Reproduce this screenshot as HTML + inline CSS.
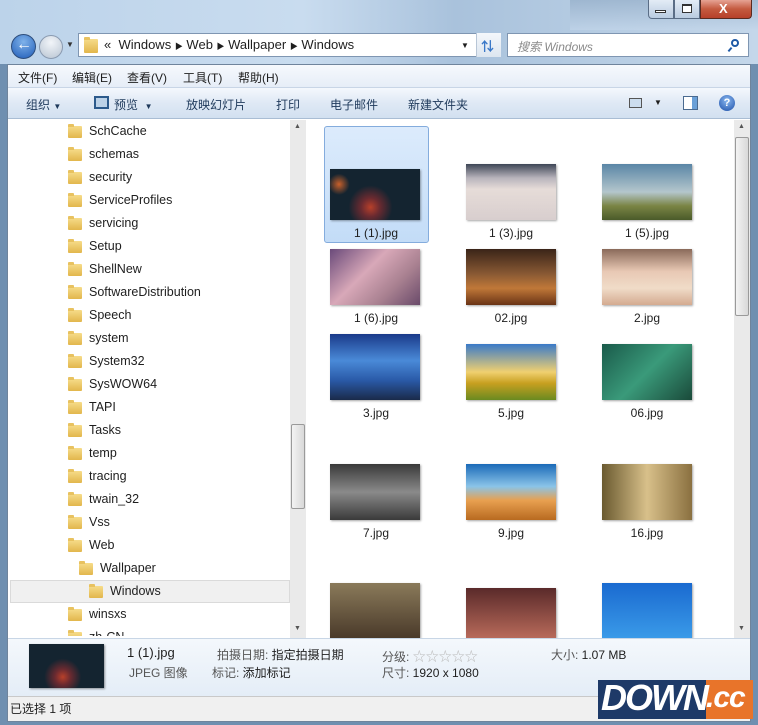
<!DOCTYPE html><html><head><meta charset="utf-8"><style>
*{margin:0;padding:0;box-sizing:border-box}
body{width:758px;height:725px;overflow:hidden;background:#6f8fb0;font-family:"Liberation Sans","Noto Sans CJK SC",sans-serif;font-size:12px;color:#1e1e1e;position:relative}
.a{position:absolute}
.t{position:absolute;white-space:nowrap}
.f{position:absolute;width:14px;height:12px;background:linear-gradient(#f6dc8a,#e2b64c);border-radius:1px}
.f:before{content:"";position:absolute;left:0;top:-2px;width:6px;height:3px;background:#e8c260;border-radius:1px 1px 0 0}
.th{position:absolute;width:90px;box-shadow:1px 1px 2px rgba(0,0,0,.35)}
.lb{position:absolute;width:130px;text-align:center;font-size:12px}
</style></head><body>
<div class="a" style="left:0;top:0;width:758px;height:64px;background:linear-gradient(90deg,#bcd3ea 0%,#c9dcef 40%,#a9c2dc 60%,#c4d7ea 100%)"></div>
<div class="a" style="left:570px;top:0;width:188px;height:30px;background:linear-gradient(#8fa9c4,#c3d6ea);opacity:.6"></div>
<div class="a" style="left:648px;top:0;width:26px;height:19px;border:1px solid #5a6d86;border-top:0;border-radius:0 0 0 4px;background:linear-gradient(#e3ecf6,#b9cbe0)"></div>
<div class="a" style="left:655px;top:10px;width:11px;height:3px;border:1px solid #333;background:#fff"></div>
<div class="a" style="left:674px;top:0;width:26px;height:19px;border:1px solid #5a6d86;border-top:0;background:linear-gradient(#e3ecf6,#b9cbe0)"></div>
<div class="a" style="left:682px;top:4px;width:10px;height:9px;border:1px solid #333;border-top-width:2px;background:#fff"></div>
<div class="a" style="left:700px;top:0;width:52px;height:19px;border:1px solid #5a2a20;border-top:0;border-radius:0 0 4px 0;background:linear-gradient(#e6a394,#c45a3f 50%,#b7402a)"></div>
<div class="t" style="left:719px;top:1px;color:#fff;font-weight:bold;font-size:13px">X</div>
<div class="a" style="left:11px;top:34px;width:25px;height:25px;border-radius:50%;background:radial-gradient(circle at 50% 30%,#7fb2ea,#1f5cb8);border:1px solid #2d4d7c"></div>
<div class="t" style="left:16px;top:36px;color:#fff;font-size:16px;font-weight:bold">&#8592;</div>
<div class="a" style="left:39px;top:35px;width:24px;height:24px;border-radius:50%;background:radial-gradient(circle at 50% 30%,#f2f5f9,#b8c4d2);border:1px solid #8a9ab0"></div>
<div class="t" style="left:66px;top:40px;font-size:8px;color:#333">&#9660;</div>
<div class="a" style="left:78px;top:33px;width:423px;height:24px;background:#fff;border:1px solid #7f96b2"></div>
<div class="f" style="left:84px;top:39px;height:14px"></div>
<div class="t" style="left:104px;top:37px;font-size:13px">«&nbsp; Windows <span style="font-size:8px">&#9654;</span> Web <span style="font-size:8px">&#9654;</span> Wallpaper <span style="font-size:8px">&#9654;</span> Windows</div>
<div class="t" style="left:461px;top:41px;font-size:8px">&#9660;</div>
<div class="a" style="left:476px;top:33px;width:25px;height:24px;border-left:1px solid #b8c6d6;background:linear-gradient(#f4f7fb,#dde6f0)"></div>
<div class="t" style="left:481px;top:36px;color:#3a78c8;font-size:13px;font-weight:bold">&#8645;</div>
<div class="a" style="left:507px;top:33px;width:242px;height:24px;background:#fff;border:1px solid #7f96b2"></div>
<div class="t" style="left:517px;top:38px;color:#8a8a8a;font-style:italic">搜索 Windows</div>
<div class="a" style="left:731px;top:39px;width:8px;height:8px;border:2px solid #1f5aa6;border-radius:50%"></div>
<div class="a" style="left:729px;top:47px;width:2px;height:5px;background:#1f5aa6;transform:rotate(40deg)"></div>
<div class="a" style="left:7px;top:64px;width:744px;height:658px;background:#fff;border:1px solid #6f849c"></div>
<div class="a" style="left:8px;top:65px;width:742px;height:23px;background:linear-gradient(#f6f9fd,#e6edf7);border-bottom:1px solid #c8d5e6"></div>
<div class="t" style="left:18px;top:69px">文件(F)</div><div class="t" style="left:72px;top:69px">编辑(E)</div><div class="t" style="left:127px;top:69px">查看(V)</div><div class="t" style="left:183px;top:69px">工具(T)</div><div class="t" style="left:238px;top:69px">帮助(H)</div>
<div class="a" style="left:8px;top:88px;width:742px;height:31px;background:linear-gradient(#f4f8fd,#dfe9f5 50%,#d2e0f0);border-bottom:1px solid #a9bdd4"></div>
<div class="t" style="left:26px;top:96px;color:#1e395b">组织 <span style="font-size:8px">&#9660;</span></div>
<div class="a" style="left:94px;top:96px;width:15px;height:13px;border:2px solid #2c5a8c;background:#bcd2e8"></div>
<div class="t" style="left:114px;top:96px;color:#1e395b">预览 &nbsp;<span style="font-size:8px">&#9660;</span></div>
<div class="t" style="left:186px;top:96px;color:#1e395b">放映幻灯片</div>
<div class="t" style="left:276px;top:96px;color:#1e395b">打印</div>
<div class="t" style="left:330px;top:96px;color:#1e395b">电子邮件</div>
<div class="t" style="left:408px;top:96px;color:#1e395b">新建文件夹</div>
<div class="a" style="left:629px;top:98px;width:13px;height:10px;border:1px solid #555;background:#cde"></div>
<div class="t" style="left:654px;top:98px;font-size:8px">&#9660;</div>
<div class="a" style="left:683px;top:96px;width:15px;height:14px;border:1px solid #4a6a90;background:linear-gradient(90deg,#fff 60%,#6aa0d8 60%)"></div>
<div class="a" style="left:719px;top:95px;width:16px;height:16px;border-radius:50%;background:radial-gradient(circle at 50% 35%,#8ab8f0,#1c4fa8);color:#fff;font-weight:bold;font-size:11px;text-align:center;line-height:16px">?</div>
<div class="a" style="left:8px;top:120px;width:298px;height:518px;background:#fff;border-right:1px solid #d6e0ea"></div>
<div class="a" style="left:10px;top:580px;width:280px;height:23px;background:#f0f0f0;border:1px solid #dadada"></div>
<div class="a" style="left:290px;top:120px;width:16px;height:518px;background:#eaeaea"></div>
<div class="a" style="left:291px;top:424px;width:14px;height:85px;background:linear-gradient(90deg,#f3f3f3,#d9d9d9);border:1px solid #9a9a9a;border-radius:2px"></div>
<div class="t" style="left:294px;top:123px;font-size:7px;color:#555">&#9650;</div>
<div class="t" style="left:294px;top:625px;font-size:7px;color:#555">&#9660;</div>
<div id="tree"></div>
<div class="a" style="left:734px;top:120px;width:16px;height:518px;background:#eaeaea"></div>
<div class="a" style="left:735px;top:137px;width:14px;height:179px;background:linear-gradient(90deg,#f3f3f3,#d9d9d9);border:1px solid #9a9a9a;border-radius:2px"></div>
<div class="t" style="left:738px;top:123px;font-size:7px;color:#555">&#9650;</div>
<div class="t" style="left:738px;top:625px;font-size:7px;color:#555">&#9660;</div>
<div class="a" style="left:324px;top:126px;width:105px;height:117px;background:linear-gradient(#dcebfc,#c3dcf7);border:1px solid #84acdd;border-radius:3px"></div>
<div class="th" style="left:330px;top:169px;height:51px;background:radial-gradient(circle at 45% 75%,#b8402a 0,#6a2a30 15%,transparent 35%),radial-gradient(circle at 10% 30%,#c8602a,transparent 12%),#142430"></div>
<div class="th" style="left:466px;top:164px;height:56px;background:linear-gradient(#3e4656,#b8b4bc 25%,#e6dcd8 45%,#d8cece)"></div>
<div class="th" style="left:602px;top:164px;height:56px;background:linear-gradient(#5a86a6,#b4c6cc 50%,#7a8444 75%,#4a5a2a)"></div>
<div class="th" style="left:330px;top:249px;height:56px;background:linear-gradient(135deg,#6a4a7a,#d8a8b8 40%,#a88090 70%,#6a4a6a)"></div>
<div class="th" style="left:466px;top:249px;height:56px;background:linear-gradient(#3a2418,#8a5a34 45%,#c07838 70%,#6a3416)"></div>
<div class="th" style="left:602px;top:249px;height:56px;background:linear-gradient(#8a6a5a,#e8c8b4 40%,#f0dcc8 70%,#d4aa90)"></div>
<div class="th" style="left:330px;top:334px;height:66px;background:linear-gradient(#1a3a8a,#4a8ad8 40%,#2a5aa8 70%,#1a2a4a)"></div>
<div class="th" style="left:466px;top:344px;height:56px;background:linear-gradient(#3a7ac8,#f0d070 50%,#c8a020 70%,#6a8a20)"></div>
<div class="th" style="left:602px;top:344px;height:56px;background:linear-gradient(135deg,#1a5a4a,#3a9a7a 50%,#1a4a3a)"></div>
<div class="th" style="left:330px;top:464px;height:56px;background:linear-gradient(#3a3a3a,#8a8a8a 50%,#3a3a3a)"></div>
<div class="th" style="left:466px;top:464px;height:56px;background:linear-gradient(#1a6ab8,#8ac4e8 40%,#e8a050 65%,#b86a20)"></div>
<div class="th" style="left:602px;top:464px;height:56px;background:linear-gradient(90deg,#6a5a30,#d8c08a 50%,#8a7040)"></div>
<div class="th" style="left:330px;top:583px;height:55px;background:linear-gradient(#8a7a5a,#4a3a2a)"></div>
<div class="th" style="left:466px;top:588px;height:50px;background:linear-gradient(#5a2a2a,#b86a5a)"></div>
<div class="th" style="left:602px;top:583px;height:55px;background:linear-gradient(#1a6ad0,#3a9ae8)"></div>
<div class="lb" style="left:311px;top:226px">1 (1).jpg</div><div class="lb" style="left:446px;top:226px">1 (3).jpg</div><div class="lb" style="left:582px;top:226px">1 (5).jpg</div>
<div class="lb" style="left:311px;top:311px">1 (6).jpg</div><div class="lb" style="left:446px;top:311px">02.jpg</div><div class="lb" style="left:582px;top:311px">2.jpg</div>
<div class="lb" style="left:311px;top:406px">3.jpg</div><div class="lb" style="left:446px;top:406px">5.jpg</div><div class="lb" style="left:582px;top:406px">06.jpg</div>
<div class="lb" style="left:311px;top:526px">7.jpg</div><div class="lb" style="left:446px;top:526px">9.jpg</div><div class="lb" style="left:582px;top:526px">16.jpg</div>
<div class="a" style="left:8px;top:638px;width:742px;height:58px;background:linear-gradient(#f4f8fc,#e4edf7);border-top:1px solid #c8d6e6"></div>
<div class="a" style="left:29px;top:644px;width:75px;height:44px;background:radial-gradient(circle at 45% 75%,#b8402a 0,#6a2a30 15%,transparent 35%),#142430;box-shadow:1px 1px 2px rgba(0,0,0,.4)"></div>
<div class="t" style="left:127px;top:645px;font-size:13px">1 (1).jpg</div>
<div class="t" style="left:129px;top:664px;color:#555">JPEG 图像</div>
<div class="t" style="left:217px;top:646px"><span style="color:#555">拍摄日期:</span> 指定拍摄日期</div>
<div class="t" style="left:212px;top:664px"><span style="color:#555">标记:</span> 添加标记</div>
<div class="t" style="left:382px;top:646px"><span style="color:#555">分级:</span> <span style="color:#bbb;font-size:13px">☆☆☆☆☆</span></div>
<div class="t" style="left:382px;top:664px"><span style="color:#555">尺寸:</span> 1920 x 1080</div>
<div class="t" style="left:551px;top:646px"><span style="color:#555">大小:</span> 1.07 MB</div>
<div class="a" style="left:8px;top:696px;width:742px;height:25px;background:#f0f0f0;border-top:1px solid #c9c9c9"></div>
<div class="t" style="left:10px;top:700px">已选择 1 项</div>
<div class="a" style="left:598px;top:680px;width:155px;height:39px;background:#1e3a68;overflow:hidden">
<div class="a" style="left:108px;top:0;width:47px;height:39px;background:#e8742a"></div>
<div class="t" style="left:3px;top:-3px;color:#fff;font-weight:bold;font-style:italic;font-size:36px;letter-spacing:-2px">DOWN</div>
<div class="t" style="left:108px;top:1px;color:#fff;font-weight:bold;font-style:italic;font-size:30px;letter-spacing:-1px">.cc</div></div>
<script>
var n=["SchCache","schemas","security","ServiceProfiles","servicing","Setup","ShellNew","SoftwareDistribution","Speech","system","System32","SysWOW64","TAPI","Tasks","temp","tracing","twain_32","Vss","Web","Wallpaper","Windows","winsxs","zh-CN"],h="";
n.forEach(function(s,i){var y=131+i*23,x=68;if(s=="Wallpaper")x=79;if(s=="Windows")x=89;
h+='<div class="f" style="left:'+x+'px;top:'+(y-5)+'px"></div><div class="t" style="left:'+(x+21)+'px;top:'+(y-7)+'px;font-size:12.5px">'+s+'</div>';});
document.getElementById("tree").innerHTML=h;
</script>
<div class="a" style="left:8px;top:636px;width:282px;height:2px;background:#fff"></div>
</body></html>
